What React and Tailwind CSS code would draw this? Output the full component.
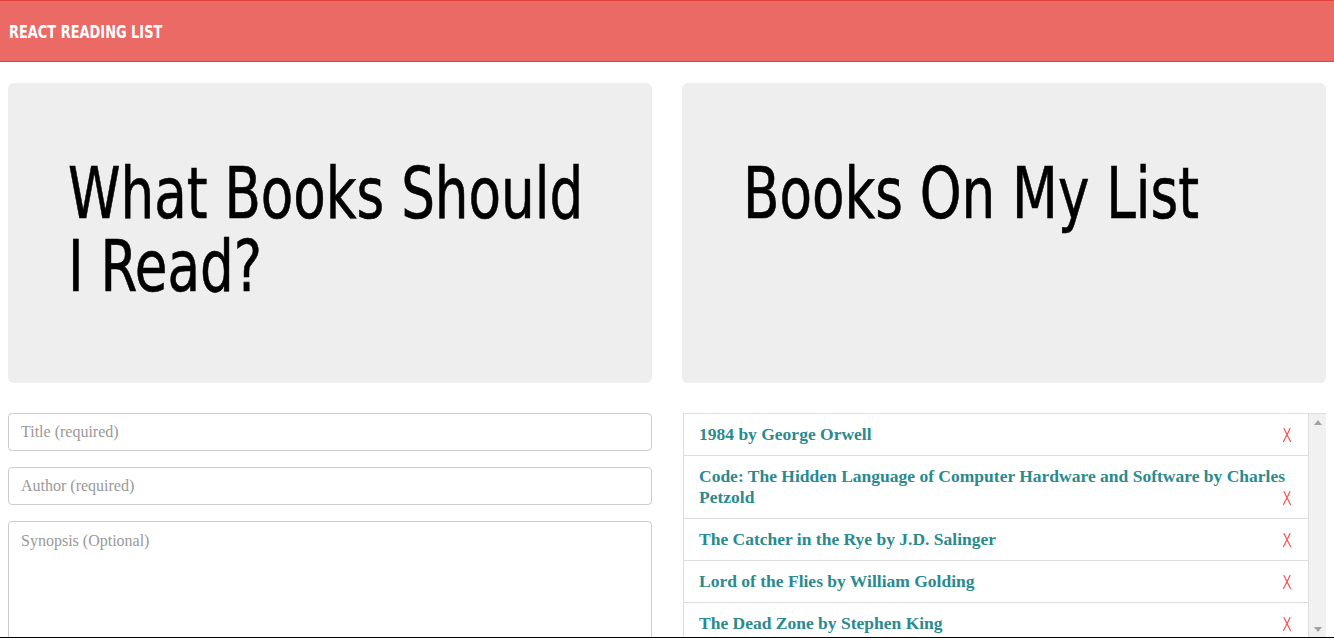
import React from "react";

const books = [
  "1984 by George Orwell",
  "Code: The Hidden Language of Computer Hardware and Software by Charles Petzold",
  "The Catcher in the Rye by J.D. Salinger",
  "Lord of the Flies by William Golding",
  "The Dead Zone by Stephen King",
  "Brave New World by Aldous Huxley",
];

const narrow = { fontFamily: '"DejaVu Sans Condensed", "DejaVu Sans", sans-serif' };
const serif = { fontFamily: '"Liberation Serif", "DejaVu Serif", serif' };

function Cross() {
  return (
    <svg width="10" height="16" viewBox="0 0 10 16" className="block">
      <path d="M2 1.5 Q5 8 8.5 14.5 M8 1.5 Q5 8 1.5 14.5" stroke="#ff4d4d" strokeWidth="1.2" fill="none" strokeLinecap="round" />
    </svg>
  );
}

export default function App() {
  return (
    <div className="h-[638px] overflow-hidden border-b border-black bg-white">
      <header className="h-[62px] border-t border-b border-[#e0413d] bg-[#ec6a66] flex items-center pl-[9px]">
        <span
          className="inline-block origin-left scale-x-[0.8] whitespace-nowrap text-white font-bold text-[18px]"
          style={narrow}
        >
          REACT READING LIST
        </span>
      </header>
      <main className="px-2 pt-[21px] grid grid-cols-2 gap-[30px]">
        <section>
          <div className="h-[300px] rounded-[6px] bg-[#eeeeee] pt-[74px] pl-[60px]">
            <h1
              className="origin-left scale-x-[0.82] whitespace-nowrap text-[72px] leading-[73px] text-black [-webkit-text-stroke:0.6px_black]"
              style={narrow}
            >
              What Books Should
              <br />I Read?
            </h1>
          </div>
          <form className="mt-[30px] flex flex-col gap-4" style={serif}>
            <input
              className="h-[38px] w-full rounded-[4px] border border-[#cccccc] px-3 text-[16px] text-[#555] placeholder:text-[#999999] outline-none"
              placeholder="Title (required)"
            />
            <input
              className="h-[38px] w-full rounded-[4px] border border-[#cccccc] px-3 text-[16px] text-[#555] placeholder:text-[#999999] outline-none"
              placeholder="Author (required)"
            />
            <textarea
              className="h-[160px] w-full resize-none rounded-[4px] border border-[#cccccc] px-3 py-[7px] text-[16px] text-[#555] placeholder:text-[#999999] outline-none"
              placeholder="Synopsis (Optional)"
            />
          </form>
        </section>
        <section>
          <div className="h-[300px] rounded-[6px] bg-[#eeeeee] pt-[74px] pl-[61px]">
            <h1
              className="origin-left scale-x-[0.82] whitespace-nowrap text-[72px] leading-[73px] text-black [-webkit-text-stroke:0.6px_black]"
              style={narrow}
            >
              Books On My List
            </h1>
          </div>
          <div className="mt-[30px] ml-[1px] flex h-[225px] overflow-hidden border-t border-[#dddddd]">
            <ul className="flex-1" style={serif}>
              {books.map((b) => (
                <li
                  key={b}
                  className="flow-root border-l border-r border-b border-[#dddddd] px-[15px] py-[10px] text-[17.5px] leading-[21px] font-bold text-[#2a8a8e]"
                >
                  {b}
                  <span className="float-right mr-[1px] flex h-[21px] items-center">
                    <Cross />
                  </span>
                </li>
              ))}
            </ul>
            <div className="w-[17px] bg-[#f1f1f1] flex flex-col items-center justify-between py-[6px]">
              <svg width="8" height="5" viewBox="0 0 8 5"><path d="M0 5 L4 0 L8 5 Z" fill="#a3a3a3" /></svg>
              <svg width="8" height="5" viewBox="0 0 8 5"><path d="M0 0 L4 5 L8 0 Z" fill="#a3a3a3" /></svg>
            </div>
          </div>
        </section>
      </main>
    </div>
  );
}
